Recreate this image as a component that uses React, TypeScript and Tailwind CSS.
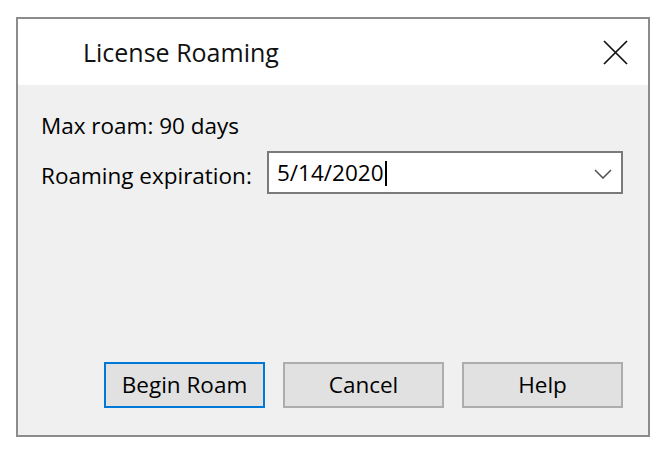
export default function App() {
  return (
    <div className="w-[668px] h-[453px] bg-white pt-[17px] pl-[16px] font-['Open_Sans',sans-serif] text-[#000]">
      <div className="w-[634px] h-[420px] border-2 border-[#8c8c8c] flex flex-col">
        {/* Title bar */}
        <div className="h-[66px] bg-white flex items-center justify-between pl-[65px] pr-[20px]">
          <span className="text-[25px] leading-none text-[#111]">License Roaming</span>
          <svg width="25" height="25" viewBox="0 0 25 25" className="text-[#111]">
            <path d="M1 1 L24 24 M24 1 L1 24" stroke="currentColor" strokeWidth="1.7" fill="none" />
          </svg>
        </div>

        {/* Body */}
        <div className="flex-1 bg-[#f0f0f0] flex flex-col pl-[23px] pr-[25px] pt-[25px] pb-[27px] text-[22.5px]">
          <div className="leading-[31px]">Max roam: 90 days</div>
          <div className="flex items-start mt-[10px]">
            <span className="w-[226px] leading-[31px] pt-[9px]">Roaming expiration:</span>
            <div className="w-[356px] h-[43px] bg-white border-2 border-[#7a7a7a] flex items-center pl-[8px] pr-[9px] pt-[2px]">
              <span className="leading-none">5/14/2020</span>
              <span className="w-[2px] h-[25px] bg-black ml-[1px]" />
              <svg width="18" height="10" viewBox="0 0 18 10" className="ml-auto text-[#555]">
                <path d="M1 1 L9 9 L17 1" stroke="currentColor" strokeWidth="1.6" fill="none" />
              </svg>
            </div>
          </div>

          <div className="mt-auto flex justify-end gap-[18px]">
            <button className="w-[161px] h-[46px] bg-[#e1e1e1] border-2 border-[#0078d7]">Begin Roam</button>
            <button className="w-[161px] h-[46px] bg-[#e1e1e1] border-2 border-[#adadad]">Cancel</button>
            <button className="w-[161px] h-[46px] bg-[#e1e1e1] border-2 border-[#adadad]">Help</button>
          </div>
        </div>
      </div>
    </div>
  );
}
